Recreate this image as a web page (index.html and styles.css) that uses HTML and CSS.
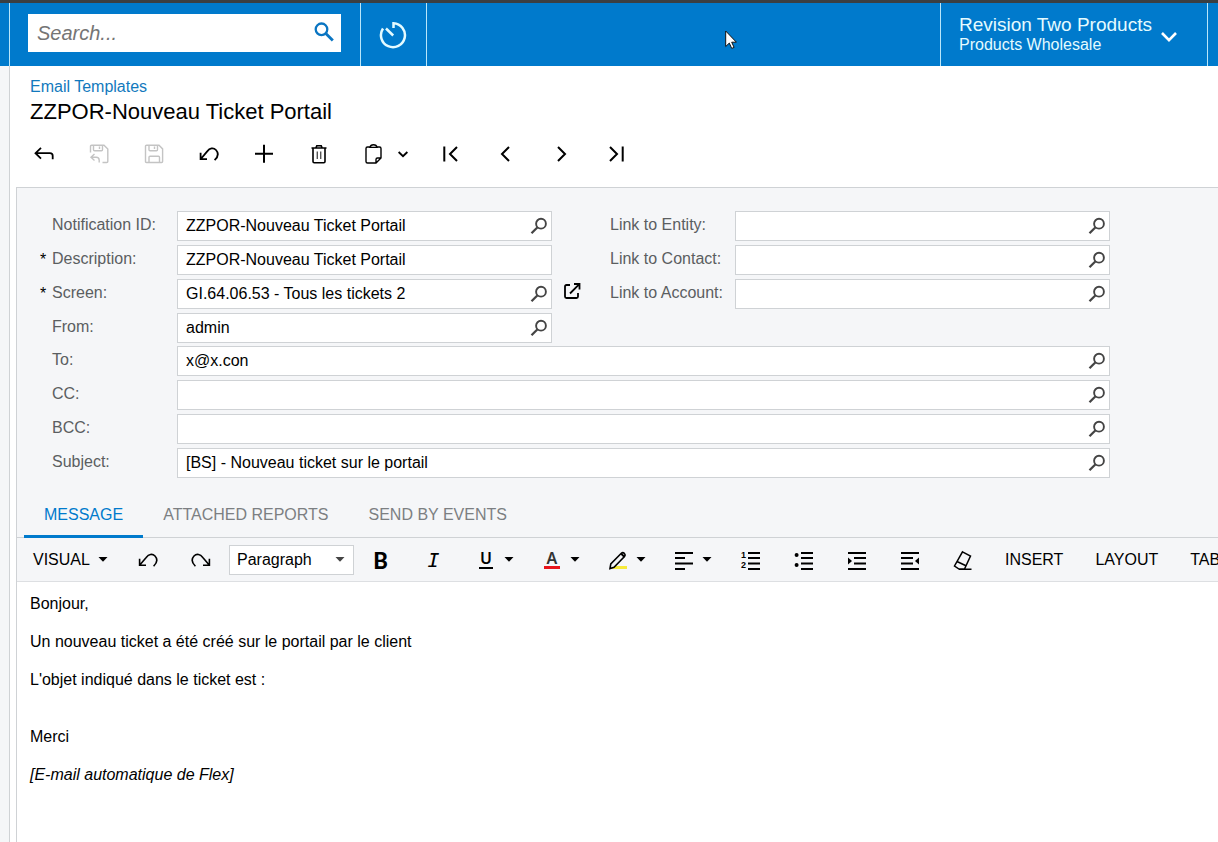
FILE: index.html
```html
<!DOCTYPE html>
<html lang="en">

<head>
    <meta charset="UTF-8">
    <meta name="viewport" content="width=device-width, initial-scale=1.0">
    <title>Email Templates</title>
    <link rel="stylesheet" href="styles.css">
</head>

<body>

    <!-- Shared icons -->
    <svg class="sprite" aria-hidden="true">
        <symbol id="lookup" viewBox="0 0 18 18">
            <circle cx="11" cy="6.7" r="4.9" fill="none" stroke="#444" stroke-width="1.9" />
            <path d="M7.3 10.5 1.5 16.2" stroke="#444" stroke-width="2.3" />
        </symbol>
        <symbol id="caret" viewBox="0 0 10 5">
            <path d="M0.5 0h9L5 4.7z" fill="currentColor" />
        </symbol>
        <symbol id="undo" viewBox="0 0 20 20">
            <path d="M1.600 8.800v6.400h6.400M1.800 15 8.200 7.400C10.700 4.200 14.300 3.200 17 6c2.700 3 2 6.900-1.400 10.200" />
        </symbol>
    </svg>

    <header class="topbar">
        <form class="search-cell">
            <div class="search-box">
                <input type="text" class="search-input" placeholder="Search..." aria-label="Search">
                <button type="button" class="search-button" aria-label="Search">
                    <svg width="20" height="20" viewBox="0 0 20 20" fill="none" stroke="#0a75c2">
                        <circle cx="7.5" cy="7.3" r="5.8" stroke-width="2.3" />
                        <path d="m11.8 11.6 7 7" stroke-width="2.8" />
                    </svg>
                </button>
            </div>
        </form>
        <button type="button" class="history-button" aria-label="Business date">
            <svg width="28" height="28" viewBox="0 0 28 28" fill="none" stroke="#e4fbff" stroke-width="2.5">
                <path d="M14.500 7V2.200A12 12 0 1 1 4 7.500" />
                <path d="m7 7.500 7.200 7" />
            </svg>
        </button>
        <button type="button" class="company-button">
            <span class="company-text">
                <span class="company-name">Revision Two Products</span>
                <span class="company-branch">Products Wholesale</span>
            </span>
            <svg class="company-chevron" width="16" height="12" viewBox="0 0 16 12" fill="none" stroke="#fff" stroke-width="2.6">
                <path d="m1 2 7 7.2L15 2" />
            </svg>
        </button>
        <svg class="pointer" width="12" height="20" viewBox="0 0 12 20">
            <path d="M.7 1v15.500l3.600-3.400 2.400 5.300 2.400-1-2.400-5.200h4.700z" fill="#fff" stroke="#111" />
        </svg>
    </header>

    <main class="page">
        <a href="#" class="breadcrumb">Email Templates</a>
        <h1 class="page-title">ZZPOR-Nouveau Ticket Portail</h1>

        <!-- Record toolbar -->
        <div class="toolbar">
            <button type="button" aria-label="Back">
                <svg class="icon" viewBox="0 0 20 20"><path d="M7 3.8 1.5 9.2 7 14.6M1.5 9.2H16q2.7 0 2.7 2.6v3.4" /></svg>
            </button>
            <button type="button" aria-label="Save and close" disabled>
                <svg class="icon icon-thin" viewBox="0 0 20 20"><path d="M1.5 8.5V2.5q0-1.2 1.2-1.2H15l3.8 3.8v12.4q0 1-1 1H13.5M4.5 1.5v4.3q0 1 1 1h7q1 0 1-1V1.5M10.5 2.5v2.6M5.5 10 2 13.2l3.5 3.2M2 13.2h5.2q3 0 3 3v2.4" /></svg>
            </button>
            <button type="button" aria-label="Save" disabled>
                <svg class="icon icon-thin" viewBox="0 0 20 20"><path d="M2.5 1.3H15l3.6 3.6v12.6q0 1-1 1H2.5q-1 0-1-1V2.3q0-1 1-1zM5 1.5v4.3q0 1 1 1h6.5q1 0 1-1V1.5M10.5 2.5v2.6M5 18.3v-5q0-1 1-1h8.500q1 0 1 1v5" /></svg>
            </button>
            <button type="button" aria-label="Undo">
                <svg class="icon"><use href="#undo" /></svg>
            </button>
            <button type="button" aria-label="Add">
                <svg class="icon" viewBox="0 0 20 20"><path d="M10 .8v18M1 9.8h18" stroke-width="2" /></svg>
            </button>
            <button type="button" aria-label="Delete">
                <svg class="icon" viewBox="0 0 20 20"><path d="M2.5 4h15M6.800 4l1-2.200h4.400l1 2.200M4 4.500v13q0 1.200 1.200 1.200h9.600q1.200 0 1.200-1.200v-13" stroke-width="1.6" /><path d="M8.3 7.500v7.500M11.700 7.500v7.500" stroke="#555" stroke-width="1.4" /></svg>
            </button>
            <button type="button" class="split" aria-label="Clipboard">
                <svg class="icon icon-thin" viewBox="0 0 20 20"><path d="M7 3H3.500q-1.500 0-1.500 1.500v13q0 1.500 1.500 1.500H12l5-5V4.500Q17 3 15.500 3H12M12 19v-3.500q0-1.500 1.500-1.500H17M6 3.400Q6.500.7 9.500.7t3.500 2.700z" /></svg>
                <svg class="chevron" viewBox="0 0 10 10"><path d="m.6 3 4.400 4.200L9.400 3" /></svg>
            </button>
            <button type="button" aria-label="First record">
                <svg class="icon" viewBox="0 0 20 20"><path d="M3.300 2.500v15M16 3l-7 7 7 7" stroke-width="2" /></svg>
            </button>
            <button type="button" aria-label="Previous record">
                <svg class="icon" viewBox="0 0 20 20"><path d="m13 3-7 7 7 7" stroke-width="2" /></svg>
            </button>
            <button type="button" aria-label="Next record">
                <svg class="icon" viewBox="0 0 20 20"><path d="m7 3 7 7-7 7" stroke-width="2" /></svg>
            </button>
            <button type="button" aria-label="Last record">
                <svg class="icon" viewBox="0 0 20 20"><path d="m4 3 7 7-7 7M16.700 2.500v15" stroke-width="2" /></svg>
            </button>
        </div>

        <section class="panel">
            <form class="record-form">
                <div class="form-columns">
                    <div class="form-column">
                        <div class="form-row">
                            <label for="notification-id">Notification ID:</label>
                            <div class="field">
                                <input type="text" id="notification-id" value="ZZPOR-Nouveau Ticket Portail">
                                <button type="button" aria-label="Select notification"><svg><use href="#lookup" /></svg></button>
                            </div>
                        </div>
                        <div class="form-row">
                            <label for="description" class="required">Description:</label>
                            <div class="field">
                                <input type="text" id="description" value="ZZPOR-Nouveau Ticket Portail" required>
                            </div>
                        </div>
                        <div class="form-row">
                            <label for="screen" class="required">Screen:</label>
                            <div class="field">
                                <input type="text" id="screen" value="GI.64.06.53 - Tous les tickets 2" required>
                                <button type="button" aria-label="Select screen"><svg><use href="#lookup" /></svg></button>
                            </div>
                            <a href="#" class="open-link" aria-label="Open screen">
                                <svg width="18" height="18" viewBox="0 0 18 18" fill="none" stroke="#000" stroke-width="1.8">
                                    <path d="M7 3H3.500Q2 3 2 4.500v10Q2 16 3.500 16h10q1.500 0 1.500-1.500V11" />
                                    <path d="M11 2h5.500v5.500M16.300 2.200 7 11.500" />
                                </svg>
                            </a>
                        </div>
                        <div class="form-row">
                            <label for="from">From:</label>
                            <div class="field">
                                <input type="text" id="from" value="admin">
                                <button type="button" aria-label="Select sender"><svg><use href="#lookup" /></svg></button>
                            </div>
                        </div>
                    </div>
                    <div class="form-column">
                        <div class="form-row">
                            <label for="link-entity" class="link-label">Link to Entity:</label>
                            <div class="field">
                                <input type="text" id="link-entity">
                                <button type="button" aria-label="Select entity"><svg><use href="#lookup" /></svg></button>
                            </div>
                        </div>
                        <div class="form-row">
                            <label for="link-contact" class="link-label">Link to Contact:</label>
                            <div class="field">
                                <input type="text" id="link-contact">
                                <button type="button" aria-label="Select contact"><svg><use href="#lookup" /></svg></button>
                            </div>
                        </div>
                        <div class="form-row">
                            <label for="link-account" class="link-label">Link to Account:</label>
                            <div class="field">
                                <input type="text" id="link-account">
                                <button type="button" aria-label="Select account"><svg><use href="#lookup" /></svg></button>
                            </div>
                        </div>
                    </div>
                </div>
                <div class="form-row form-row-wide">
                    <label for="to">To:</label>
                    <div class="field">
                        <input type="text" id="to" value="x@x.con">
                        <button type="button" aria-label="Select recipients"><svg><use href="#lookup" /></svg></button>
                    </div>
                </div>
                <div class="form-row form-row-wide">
                    <label for="cc">CC:</label>
                    <div class="field">
                        <input type="text" id="cc">
                        <button type="button" aria-label="Select CC"><svg><use href="#lookup" /></svg></button>
                    </div>
                </div>
                <div class="form-row form-row-wide">
                    <label for="bcc">BCC:</label>
                    <div class="field">
                        <input type="text" id="bcc">
                        <button type="button" aria-label="Select BCC"><svg><use href="#lookup" /></svg></button>
                    </div>
                </div>
                <div class="form-row form-row-wide">
                    <label for="subject">Subject:</label>
                    <div class="field">
                        <input type="text" id="subject" value="[BS] - Nouveau ticket sur le portail">
                        <button type="button" aria-label="Insert field"><svg><use href="#lookup" /></svg></button>
                    </div>
                </div>
            </form>

            <div class="tabs" role="tablist">
                <button type="button" class="tab active" role="tab" aria-selected="true">MESSAGE</button>
                <button type="button" class="tab" role="tab">ATTACHED REPORTS</button>
                <button type="button" class="tab" role="tab">SEND BY EVENTS</button>
            </div>

            <!-- Editor toolbar -->
            <div class="editor-bar">
                <button type="button" class="visual">VISUAL <svg class="caret"><use href="#caret" /></svg></button>
                <button type="button" class="tool" aria-label="Undo"><svg class="icon icon-line"><use href="#undo" /></svg></button>
                <button type="button" class="tool" aria-label="Redo"><svg class="icon icon-line flip"><use href="#undo" /></svg></button>
                <div class="style-select">
                    <select aria-label="Paragraph style">
                        <option>Paragraph</option>
                    </select>
                    <svg class="caret"><use href="#caret" /></svg>
                </div>
                <button type="button" class="tool bold" aria-label="Bold">B</button>
                <button type="button" class="tool italic" aria-label="Italic">I</button>
                <button type="button" class="tool-split" aria-label="Underline">
                    <span class="glyph underline">U</span>
                    <svg class="caret"><use href="#caret" /></svg>
                </button>
                <button type="button" class="tool-split" aria-label="Text color">
                    <span class="glyph color">A</span>
                    <svg class="caret"><use href="#caret" /></svg>
                </button>
                <button type="button" class="tool-split" aria-label="Highlight color">
                    <svg class="icon" viewBox="0 0 20 20"><path d="M4 17.500h15" stroke="#f7ea3c" stroke-width="3" /><path d="m2 18.500.8-4.600L13.300 3.300q1.500-1.300 3 0 1.500 1.600.2 3.200L6 17.300z" fill="#f5f6f8" stroke-width="1.600" /><path d="m13 3.600 3.500 3.300" stroke-width="2" /></svg>
                    <svg class="caret"><use href="#caret" /></svg>
                </button>
                <button type="button" class="tool-split" aria-label="Align">
                    <svg class="icon" viewBox="0 0 20 20"><path d="M1 3h18M1 8h10M1 13.500h18M1 19h10" /></svg>
                    <svg class="caret"><use href="#caret" /></svg>
                </button>
                <button type="button" class="tool" aria-label="Numbered list">
                    <svg class="icon" viewBox="0 0 20 20"><path d="M7 3h12M7 8h12M7 13.500h12M7 19h12" /><text x="0" y="8" class="number">1</text><text x="0" y="18" class="number">2</text></svg>
                </button>
                <button type="button" class="tool" aria-label="Bulleted list">
                    <svg class="icon" viewBox="0 0 20 20"><path d="M7 3h12M7 8h12M7 13.500h12M7 19h12" /><circle cx="2.600" cy="5" r="2" class="solid" /><circle cx="2.600" cy="15" r="2" class="solid" /></svg>
                </button>
                <button type="button" class="tool" aria-label="Indent">
                    <svg class="icon" viewBox="0 0 20 20"><path d="M1 3h18M7 8h12M7 13.500h12M1 19h18" /><path d="M1 7.500v7L5 11z" class="solid" /></svg>
                </button>
                <button type="button" class="tool" aria-label="Outdent">
                    <svg class="icon" viewBox="0 0 20 20"><path d="M1 3h18M1 8h12M1 13.500h12M1 19h18" /><path d="M19 7.500v7L15 11z" class="solid" /></svg>
                </button>
                <button type="button" class="tool" aria-label="Clear formatting">
                    <svg class="icon" viewBox="0 0 20 20"><path d="M9.500 1.800 17.500 6 11.500 19H6L1.500 16zM4.500 11.800l8.500 4M6 19.200h12.500" stroke-width="1.500" /></svg>
                </button>
                <button type="button" class="menu">INSERT</button>
                <button type="button" class="menu">LAYOUT</button>
                <button type="button" class="menu">TABLE</button>
            </div>

            <div class="editor" contenteditable="true" spellcheck="false">
                <p>Bonjour,</p>
                <p>Un nouveau ticket a été créé sur le portail par le client</p>
                <p>L'objet indiqué dans le ticket est :<br><br></p>
                <p>Merci</p>
                <p><em>[E-mail automatique de Flex]</em></p>
            </div>
        </section>
    </main>

</body>

</html>
```
FILE: styles.css
```css
* {
    box-sizing: border-box;
}

body {
    font-family: "Liberation Sans", Arial, sans-serif;
    font-size: 16px;
    line-height: 19px;
    margin: 0;
    min-height: 100vh;
    display: flex;
    flex-direction: column;
    background-color: #f5f6f8;
    color: #000;
    overflow-x: hidden;
}

button,
input,
select {
    font: inherit;
    color: inherit;
    border: none;
    background: none;
    padding: 0;
    margin: 0;
}

button {
    cursor: pointer;
}

svg {
    display: block;
    flex: none;
}

.sprite {
    position: absolute;
    width: 0;
    height: 0;
}

/* Top bar */
.topbar {
    position: relative;
    display: flex;
    height: 66px;
    border-top: 3px solid #3b3f42;
    padding: 0 10px 0 9px;
    background-color: #007acc;
    color: #e4fbff;
}

.search-cell {
    border-left: 1px solid #b9e6fa;
    border-right: 1px solid #b9e6fa;
    padding: 11px 19px 0 18px;
}

.search-box {
    display: flex;
    width: 313px;
    height: 38px;
    background-color: #fff;
}

.search-input {
    flex: 1;
    min-width: 0;
    padding-left: 9px;
    font-size: 20px;
    font-style: italic;
    color: #000;
}

.search-input::placeholder {
    color: #757575;
}

.search-button {
    width: 34px;
    padding: 0 0 2px 7px;
}

.history-button {
    display: flex;
    align-items: center;
    justify-content: center;
    width: 66px;
    padding-right: 2px;
    border-right: 1px solid #b9e6fa;
}

.company-button {
    display: flex;
    align-items: center;
    justify-content: space-between;
    width: 268px;
    margin-left: auto;
    padding: 0 30px 0 18px;
    border-left: 1px solid #b9e6fa;
    border-right: 1px solid #b9e6fa;
    text-align: left;
}

.company-text {
    display: flex;
    flex-direction: column;
    padding-bottom: 2px;
    white-space: nowrap;
}

.company-name {
    font-size: 19px;
    line-height: 21px;
}

.company-chevron {
    margin-top: 4px;
}

.pointer {
    position: absolute;
    left: 725px;
    top: 27px;
}

/* Page */
.page {
    flex: 1;
    display: flex;
    flex-direction: column;
    margin-left: 9px;
    padding: 11px 0 0 6px;
    border-left: 1px solid #cfd2d5;
    background-color: #fff;
}

.breadcrumb {
    margin-left: 14px;
    align-self: flex-start;
    color: #1279bd;
    text-decoration: none;
}

.page-title {
    margin: 3px 0 0 14px;
    font-size: 22px;
    line-height: 26px;
    font-weight: normal;
}

.toolbar {
    display: flex;
    height: 62px;
    padding-bottom: 4px;
}

.toolbar button {
    display: flex;
    align-items: center;
    justify-content: center;
    width: 55px;
}

.toolbar .split {
    width: 77px;
    gap: 14px;
    justify-content: flex-start;
    padding-left: 18px;
}

.toolbar button:disabled {
    color: #c4c4c4;
    cursor: default;
}

.icon {
    width: 20px;
    height: 20px;
    fill: none;
    stroke: currentColor;
    stroke-width: 1.8;
}

.icon-thin {
    stroke-width: 1.4;
}

.icon-line {
    stroke-width: 1.6;
}

.icon .solid {
    fill: currentColor;
    stroke: none;
}

.icon .number {
    font-size: 9px;
    font-weight: bold;
    fill: currentColor;
    stroke: none;
}

.flip {
    transform: scaleX(-1);
}

.chevron {
    width: 10px;
    height: 10px;
    fill: none;
    stroke: #000;
    stroke-width: 1.9;
}

.caret {
    width: 10px;
    height: 5px;
}

/* Record form */
.panel {
    flex: 1;
    border-top: 1px solid #cfd2d5;
    border-left: 1px solid #cfd2d5;
    background-color: #f5f6f8;
    display: flex;
    flex-direction: column;
}

.record-form {
    padding: 23px 108px 7px 23px;
}

.form-columns {
    display: grid;
    grid-template-columns: minmax(0, 1fr) minmax(0, 1fr);
    column-gap: 46px;
    margin-bottom: 3px;
}

.form-column {
    display: flex;
    flex-direction: column;
    gap: 4px;
}

.form-row {
    display: flex;
    align-items: center;
    height: 30px;
}

.form-row-wide {
    margin-bottom: 4px;
}

.form-row label {
    position: relative;
    flex: none;
    width: 137px;
    padding: 0 0 3px 12px;
    color: #5b5e61;
    white-space: nowrap;
}

.required::before {
    content: "*";
    position: absolute;
    left: 0;
    top: 1px;
    color: #000;
}

.field {
    flex: 1;
    min-width: 0;
    display: flex;
    height: 30px;
    border: 1px solid #cfd2d5;
    background-color: #fff;
}

.field input {
    flex: 1;
    min-width: 0;
    padding: 0 0 2px 8px;
}

.field button {
    width: 25px;
    padding-left: 4px;
}

.field svg {
    width: 18px;
    height: 18px;
}

.open-link {
    width: 18px;
    margin: 0 -29px 6px 11px;
}

/* Tabs */
.tabs {
    display: flex;
    height: 49px;
    padding-left: 7px;
    border-bottom: 1px solid #cfd2d5;
}

.tab {
    height: 49px;
    padding: 4px 20px 0;
    border-bottom: 3px solid transparent;
    color: #7c7f82;
    white-space: nowrap;
}

.tab.active {
    border-bottom-color: #007acc;
    color: #007acc;
}

/* Editor */
.editor-bar {
    display: flex;
    align-items: center;
    height: 44px;
    border-bottom: 1px solid #dddfe2;
    overflow: hidden;
}

.editor-bar button {
    flex: none;
    display: flex;
    align-items: center;
    height: 43px;
}

.editor-bar .visual {
    width: 104px;
    padding-left: 16px;
    gap: 8px;
}

.editor-bar .tool {
    width: 53px;
    justify-content: center;
}

.editor-bar .tool-split {
    width: 66px;
    padding-left: 16px;
    gap: 8px;
}

.editor-bar .menu {
    padding: 0 16px;
}

.style-select {
    flex: none;
    display: flex;
    align-items: center;
    width: 125px;
    height: 30px;
    margin-left: 2px;
    border: 1px solid #cfd2d5;
    background-color: #fff;
    color: #444;
}

.style-select select {
    appearance: none;
    width: 105px;
    height: 28px;
    padding-left: 7px;
    color: #000;
}

.editor-bar .bold {
    font-family: Lato, sans-serif;
    font-size: 22px;
    font-weight: 900;
    padding-top: 2px;
}

.editor-bar .italic {
    font-family: "DejaVu Sans Mono", monospace;
    font-size: 20px;
    font-style: italic;
    padding-top: 2px;
}

.glyph {
    width: 20px;
    height: 18px;
    text-align: center;
    font-family: "Noto Sans", sans-serif;
    font-weight: 600;
    line-height: 15px;
}

.underline {
    width: 14px;
    margin: 0 3px;
    border-bottom: 2px solid #000;
}

.color {
    width: 16px;
    margin: 0 2px;
    border-bottom: 3px solid #e8141b;
    color: #333;
}

.editor {
    flex: 1;
    padding: 12px 13px;
    background-color: #fff;
}

.editor p {
    margin: 0 0 19px;
}
```
